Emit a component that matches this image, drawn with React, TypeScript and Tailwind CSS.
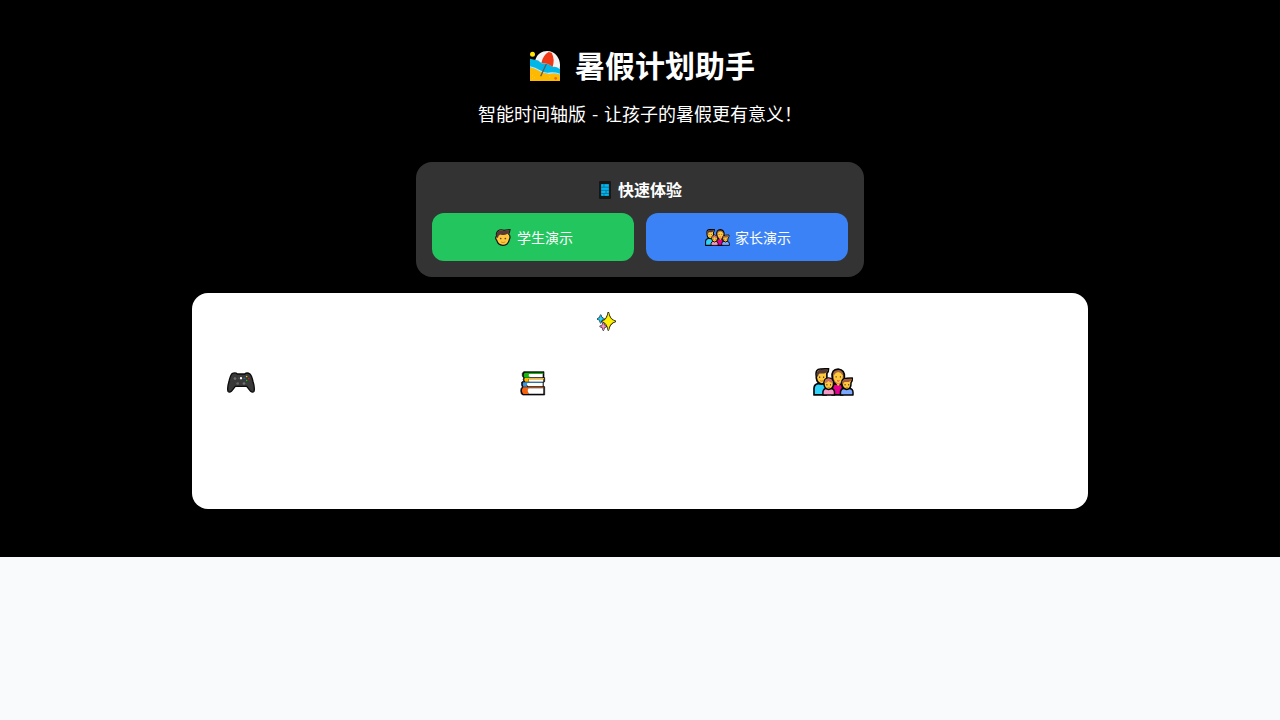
import type { ReactNode } from 'react';

type IconProps = { className?: string };

function BeachIcon({ className }: IconProps) {
  return (
    <svg viewBox="30 33 93 90" preserveAspectRatio="none" className={className} aria-hidden="true">
      <path d="M33 56 L60 62 L123 84 V108 L33 90Z" fill="#00b7e8" />
      <path d="M33 82 Q52 86 63 93 Q82 104 96 100 Q108 98 123 104 V123 H33Z" fill="#ffb900" />
      <path d="M33 79 Q50 83 62 90 Q80 102 96 97 Q108 96 123 101 V104 Q108 99 96 101 Q80 105 62 94 Q50 86 33 82Z" fill="#bfe8ee" />
      <circle cx="40.5" cy="43" r="7.5" fill="#ffe500" />
      <path d="M83 70 L65 109" stroke="#5c5c5c" strokeWidth="4" />
      <path d="M49 60 C57 30 97 24 114 48 C124 62 124 75 122 87 Q111 79 101 81 Q87 68 68 70 Q58 60 49 60Z" fill="#f4f4f4" />
      <path d="M89 36 Q72 45 67 69 Q86 68 101 81 Q108 57 98 38Z" fill="#f03a17" />
      <circle cx="110" cy="115" r="4" fill="#f7630c" />
      <path d="M40 107h2M46 113h2M39 116h2M91 110h2" stroke="#ffe88a" strokeWidth="2" />
    </svg>
  );
}

function PhoneIcon({ className }: IconProps) {
  return (
    <svg viewBox="29 23 34 52" preserveAspectRatio="none" className={className} aria-hidden="true">
      <rect x="29" y="23" width="34" height="52" rx="3" fill="#161616" />
      <rect x="35" y="32" width="22" height="34" fill="#00b7f1" />
      <path d="M35 41h22M35 50h22M35 59h22M43 32v9M49 50v9M43 59v7" stroke="#075d7c" strokeWidth="2" />
    </svg>
  );
}

function BoyIcon({ className }: IconProps) {
  return (
    <svg viewBox="29 23 48 50" preserveAspectRatio="none" className={className} aria-hidden="true">
      <path d="M34 43 C30 29 43 22 56 27 L74 25 Q73 32 70 38 Q77 44 72 54 Q68 71 53 71 Q38 71 34 56 Q28 50 34 43Z" fill="#ffc83d" stroke="#111" strokeWidth="3.5" />
      <path d="M34 44 C31 29 44 24 56 28 L73 26 Q72 37 65 38 Q56 43 45 39 Q38 42 38 49 L34 49Z" fill="#563b38" />
      <circle cx="46" cy="51" r="2.5" fill="#604322" />
      <circle cx="60" cy="51" r="2.5" fill="#604322" />
      <path d="M47 61 Q53 65 60 61" stroke="#b87620" strokeWidth="2" fill="none" />
    </svg>
  );
}

function FamilyIcon({ className }: IconProps) {
  return (
    <svg viewBox="22 27 124 82" preserveAspectRatio="none" className={className} aria-hidden="true">
      <g stroke="#050505" strokeWidth="5" strokeLinejoin="round">
        <path d="M25 106 V86 Q26 74 39 73 H50 Q61 74 62 86 V106Z" fill="#31d2f7" />
        <path d="M80 106 V86 Q82 73 92 73 H103 Q111 75 112 88 V106Z" fill="#e3008c" />
        <path d="M32 51 Q28 29 46 30 L69 29 Q69 38 64 43 V56 Q62 73 48 74 Q34 72 32 56Z" fill="#ffc83d" />
        <path d="M80 54 Q77 31 98 30 Q119 32 117 55 Q116 71 107 74 H90 Q81 69 80 54Z" fill="#a56a43" />
      </g>
      <path d="M33 49 Q31 32 47 32 L67 31 Q66 43 55 43 H42 Q38 44 37 52 H33Z" fill="#563b38" />
      <path d="M85 49 Q90 40 98 39 Q107 40 112 49 Q113 70 99 72 Q84 69 85 49Z" fill="#ffc83d" />
      <path d="M91 72 L98 80 L106 72Z" fill="#ffc83d" />
      <path d="M44 64 Q48 67 53 64" stroke="#a65c0b" strokeWidth="2" fill="none" />
      <path d="M95 64 Q98 67 102 64" stroke="#e3008c" strokeWidth="2.5" fill="none" />
      <path d="M42 52v4M54 52v4M92 51v4M105 51v4" stroke="#59411b" strokeWidth="3.5" />
      <g stroke="#050505" strokeWidth="4.5" strokeLinejoin="round">
        <path d="M52 106 V97 Q53 87 64 86 H75 Q87 88 87 98 V106Z" fill="#f59ac8" />
        <path d="M105 106 V97 Q106 87 116 86 H131 Q143 88 143 98 V106Z" fill="#7ba7ff" />
        <path d="M55 73 Q55 56 69 56 Q84 56 84 73 Q84 88 69 90 Q56 88 55 73Z" fill="#ffc83d" />
        <path d="M109 72 Q108 57 123 57 L141 56 Q142 65 137 70 Q138 88 124 90 Q110 87 109 72Z" fill="#ffc83d" />
      </g>
      <path d="M57 71 Q56 58 69 58 Q81 58 82 71 Q76 71 69 65 Q63 72 57 71Z" fill="#c27557" />
      <path d="M66 58 L77 61 L73 66Z" fill="#f05c9d" />
      <path d="M111 70 Q110 59 123 59 L139 58 Q138 67 130 68 H118 Q113 69 113 75Z" fill="#a65c3c" />
      <path d="M64 74v4M75 74v4M119 74v4M130 74v4" stroke="#59411b" strokeWidth="3" />
      <path d="M66 84h7M121 84h7" stroke="#b96f18" strokeWidth="2" />
    </svg>
  );
}

function SparklesIcon({ className }: IconProps) {
  return (
    <svg viewBox="20 22 57 57" preserveAspectRatio="none" className={className} aria-hidden="true">
      <g stroke="#080808" strokeWidth="3.5" strokeLinejoin="round">
        <path d="M31 32 Q32 42 41 43 Q32 44 31 54 Q30 44 22 43 Q30 42 31 32Z" fill="#31d2f7" strokeWidth="5" />
        <path d="M39 54 Q40 64 48 65 Q40 66 39 76 Q38 66 30 65 Q38 64 39 54Z" fill="#f59ac8" strokeWidth="5" />
        <path d="M31 32 Q32 42 41 43 Q32 44 31 54 Q30 44 22 43 Q30 42 31 32Z" fill="#31d2f7" stroke="#31d2f7" strokeWidth="2" />
        <path d="M39 54 Q40 64 48 65 Q40 66 39 76 Q38 66 30 65 Q38 64 39 54Z" fill="#f59ac8" stroke="#f59ac8" strokeWidth="2" />
        <path d="M54 24 Q57 45 75 50 Q57 55 54 76 Q51 55 36 50 Q51 45 54 24Z" fill="#fff100" strokeWidth="5" />
        <path d="M54 24 Q57 45 75 50 Q57 55 54 76 Q51 55 36 50 Q51 45 54 24Z" fill="#fff100" stroke="#fff100" strokeWidth="1" />
      </g>
    </svg>
  );
}

function GamepadIcon({ className }: IconProps) {
  return (
    <svg viewBox="20 31 84 64" preserveAspectRatio="none" className={className} aria-hidden="true">
      <path d="M35 36 Q45 31 51 37 H73 Q80 31 89 37 Q94 42 98 60 Q104 79 101 90 Q97 95 91 90 L79 75 H45 L33 90 Q27 95 23 90 Q20 79 26 60 Q30 41 35 36Z" fill="#393939" stroke="#0b0b0b" strokeWidth="4" strokeLinejoin="round" />
      <circle cx="44" cy="51" r="4" fill="#707070" />
      <circle cx="52" cy="66" r="4" fill="#666" />
      <circle cx="71" cy="66" r="4" fill="#707070" />
      <circle cx="62" cy="50" r="3.5" fill="#fff" />
      <path d="M54 50h2M68 50h2" stroke="#777" strokeWidth="2" />
      <circle cx="79" cy="45" r="2.3" fill="#ffb900" />
      <circle cx="73" cy="50" r="2.3" fill="#0078d7" />
      <circle cx="85" cy="51" r="2.3" fill="#e81224" />
      <circle cx="79" cy="57" r="2.3" fill="#16c60c" />
    </svg>
  );
}

function BooksIcon({ className }: IconProps) {
  return (
    <svg viewBox="24 27 78 75" preserveAspectRatio="none" className={className} aria-hidden="true">
      <path d="M35 29 H96 V44 L98 47 V59 L94 62 V72 L98 74 V99 H32 Q26 96 26 86 Q26 78 31 75 Q27 69 29 60 L35 57 Q32 52 35 48 Q29 42 31 34Z" fill="#080808" stroke="#080808" strokeWidth="2" />
      <path d="M38 32 H94 V36 H53 Q48 41 54 47 H38 Q32 39 38 32Z" fill="#16b80c" />
      <path d="M51 36 H92 V46 H53 Q48 41 51 36Z" fill="#fff" />
      <path d="M38 48 H96 V52 H50 Q47 55 51 59 H40 Q34 54 38 48Z" fill="#ffb900" />
      <path d="M51 52 H94 V59 H52 Q48 56 51 52Z" fill="#fff" />
      <path d="M34 61 H92 V64 H47 Q41 69 46 74 H34 Q29 67 34 61Z" fill="#3b96dd" />
      <path d="M46 63 H92 V73 H48 Q42 69 46 63Z" fill="#fff" />
      <path d="M34 76 H95 V79 H51 Q43 87 51 96 H34 Q25 86 34 76Z" fill="#f7630c" />
      <path d="M50 79 H94 V95 H51 Q43 87 50 79Z" fill="#fff" />
    </svg>
  );
}

function DemoButton({ color, icon, children }: { color: string; icon: ReactNode; children: ReactNode }) {
  return (
    <button type="button" className={`flex h-12 items-center justify-center rounded-xl text-sm ${color}`}>
      {icon}
      <span>{children}</span>
    </button>
  );
}

export default function App() {
  return (
    <div className="min-h-screen bg-[#f9fafb] font-['Noto_Sans_CJK_SC',sans-serif] text-white">
      <header className="bg-black pt-[46px] pb-12">
        <h1 className="flex h-9 items-center justify-center text-3xl font-bold">
          <span className="flex w-[50px] pt-[3px] pl-1">
            <BeachIcon className="h-[30px] w-[31px]" />
          </span>
          <span>暑假计划助手</span>
        </h1>
        <p className="mt-[17px] flex h-[30px] justify-center text-lg leading-[29px]">
          <span>智能时间轴版</span>
          <span className="w-[18px] text-center">-</span>
          <span>让孩子的暑假更有意义！</span>
        </p>

        <section className="mx-auto mt-[33px] max-w-md rounded-2xl bg-[#333333] px-4 pt-[15px] pb-4">
          <h2 className="mb-3 flex h-6 items-center justify-center text-base font-bold">
            <span className="flex w-5 pt-px pl-[1.5px]">
              <PhoneIcon className="h-[18px] w-3" />
            </span>
            <span>快速体验</span>
          </h2>
          <div className="grid grid-cols-2 gap-3">
            <DemoButton
              color="bg-[#22c55e]"
              icon={<span className="flex w-6 pt-px pl-[1.5px]"><BoyIcon className="h-[17px] w-4" /></span>}
            >
              学生演示
            </DemoButton>
            <DemoButton
              color="bg-[#3b82f6]"
              icon={<span className="flex w-8 pl-[1.5px]"><FamilyIcon className="h-[17px] w-[25px]" /></span>}
            >
              家长演示
            </DemoButton>
          </div>
        </section>

        <section className="mx-auto mt-4 h-[216px] max-w-4xl rounded-2xl bg-white p-4">
          <div className="mx-auto flex h-6 w-[87px] items-center">
            <SparklesIcon className="h-[19px] w-[19px]" />
          </div>
          <div className="mt-4 grid grid-cols-3 gap-4">
            <div className="h-36 p-4">
              <div className="flex h-[34px] items-center pl-[2.5px]">
                <GamepadIcon className="h-[21px] w-7" />
              </div>
            </div>
            <div className="h-36 p-4">
              <div className="flex h-9 items-center pl-[2.5px]">
                <BooksIcon className="h-[25px] w-[26px]" />
              </div>
            </div>
            <div className="h-36 p-4">
              <div className="flex h-[34px] items-center pl-0.5">
                <FamilyIcon className="h-7 w-[41px]" />
              </div>
            </div>
          </div>
        </section>
      </header>
    </div>
  );
}
